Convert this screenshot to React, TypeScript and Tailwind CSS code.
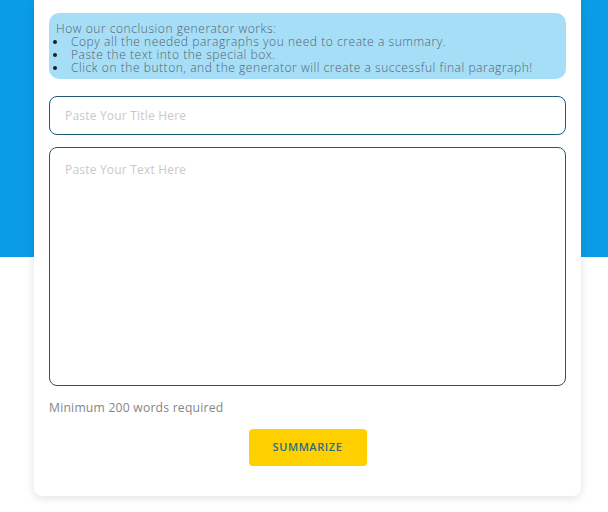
const steps = [
  "Copy all the needed paragraphs you need to create a summary.",
  "Paste the text into the special box.",
  "Click on the button, and the generator will create a successful final paragraph!",
];

function InfoBox() {
  return (
    <div className="rounded-[10px] bg-[#a6def7] px-[4px] pt-[9px] pb-[5px] text-[12px] font-light leading-[13px] tracking-[0.55px] text-[#55636d]">
      <p className="pl-[3px]">How our conclusion generator works:</p>
      <ul>
        {steps.map((s, i) => (
          <li key={i} className="flex items-center">
            <span className="mr-[14px] h-[4px] w-[4px] shrink-0 rounded-full bg-[#1e1e1e]" />
            <span>{s}</span>
          </li>
        ))}
      </ul>
    </div>
  );
}

export default function App() {
  return (
    <div
      className="h-[512px] w-full bg-[linear-gradient(#0a9de6_257px,#ffffff_257px)]"
      style={{ fontFamily: '"Open Sans", "Noto Sans", sans-serif' }}
    >
      <div className="mx-[34px] w-[547px] rounded-b-lg bg-white px-[15px] pt-[13px] pb-[30px] shadow-[0_2px_10px_rgba(0,0,0,0.12)]">
        <InfoBox />
        <input
          type="text"
          placeholder="Paste Your Title Here"
          className="mt-[17px] block h-[39px] w-full rounded-lg border border-[#1f5a74] bg-white px-[15px] text-[12px] tracking-[0.2px] text-[#333] outline-none placeholder:text-[#c9c9c9]"
        />
        <textarea
          placeholder="Paste Your Text Here"
          className="mt-[12px] block h-[239px] w-full resize-none rounded-lg border border-[#1f5a74] bg-white px-[15px] pt-[13px] text-[12px] tracking-[0.2px] text-[#333] outline-none placeholder:text-[#c9c9c9]"
        />
        <p className="mt-[14px] text-[12.2px] leading-[16px] tracking-[0.2px] text-[#868686]">
          Minimum 200 words required
        </p>
        <div className="mt-[13px] flex justify-center">
          <button className="h-[37px] w-[118px] rounded-[4px] bg-[#ffd000] text-[11px] font-semibold tracking-[0.6px] text-[#2b6b8c]">
            SUMMARIZE
          </button>
        </div>
      </div>
    </div>
  );
}
